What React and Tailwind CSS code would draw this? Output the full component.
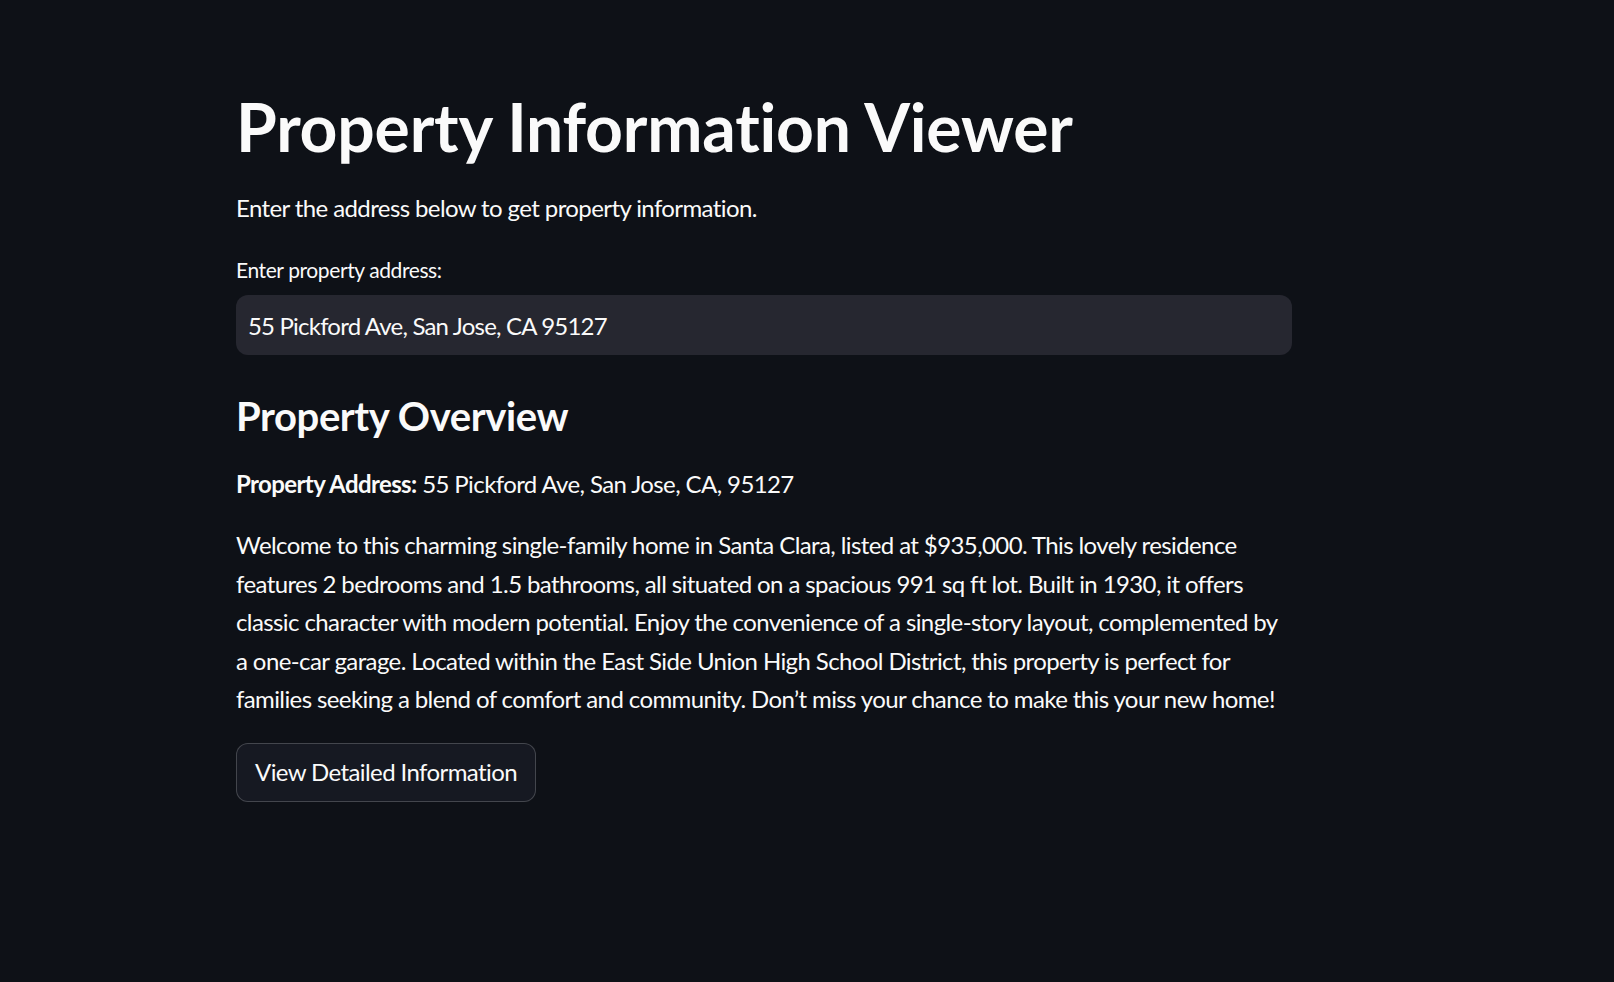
import React, { useState } from "react";

const description =
  "Welcome to this charming single-family home in Santa Clara, listed at $935,000. This lovely residence features 2 bedrooms and 1.5 bathrooms, all situated on a spacious 991 sq ft lot. Built in 1930, it offers classic character with modern potential. Enjoy the convenience of a single-story layout, complemented by a one-car garage. Located within the East Side Union High School District, this property is perfect for families seeking a blend of comfort and community. Don\u2019t miss your chance to make this your new home!";

export default function App() {
  const [address, setAddress] = useState("55 Pickford Ave, San Jose, CA 95127");

  return (
    <div className="min-h-screen w-full bg-[#0e1117] text-[#fafafa] [font-family:Lato,'Noto_Sans',sans-serif]">
      <div className="w-[1056px] ml-[236px] pt-[82px] pb-24">
        {/* title */}
        <h1 className="text-[66px] leading-[90px] font-bold tracking-[-0.2px]">
          Property Information Viewer
        </h1>
        <p className="mt-[17px] text-[24px] leading-[38px] tracking-[-0.6px]">
          Enter the address below to get property information.
        </p>

        {/* address input */}
        <label className="block mt-[27px] text-[21px] leading-[32px] tracking-[-0.4px]">
          Enter property address:
        </label>
        <input
          type="text"
          value={address}
          onChange={(e) => setAddress(e.target.value)}
          className="mt-[9px] w-full h-[60px] rounded-[12px] bg-[#262730] px-[12px] text-[24px] tracking-[-0.8px] text-[#fafafa] outline-none"
        />

        {/* overview */}
        <h2 className="mt-[35px] text-[40px] leading-[52px] font-bold tracking-[-0.4px]">
          Property Overview
        </h2>
        <p className="mt-[23px] text-[24px] leading-[38px] tracking-[-0.6px]">
          <span className="font-bold">Property Address:</span> 55 Pickford Ave, San Jose, CA, 95127
        </p>
        <p className="mt-[23px] text-[24px] leading-[38.6px] tracking-[-0.6px]">{description}</p>

        <button className="mt-[24px] h-[59px] px-[18px] rounded-[12px] border border-[#fafafa33] bg-[#161922] text-[24px] tracking-[-0.6px] text-[#fafafa]">
          View Detailed Information
        </button>
      </div>
    </div>
  );
}
